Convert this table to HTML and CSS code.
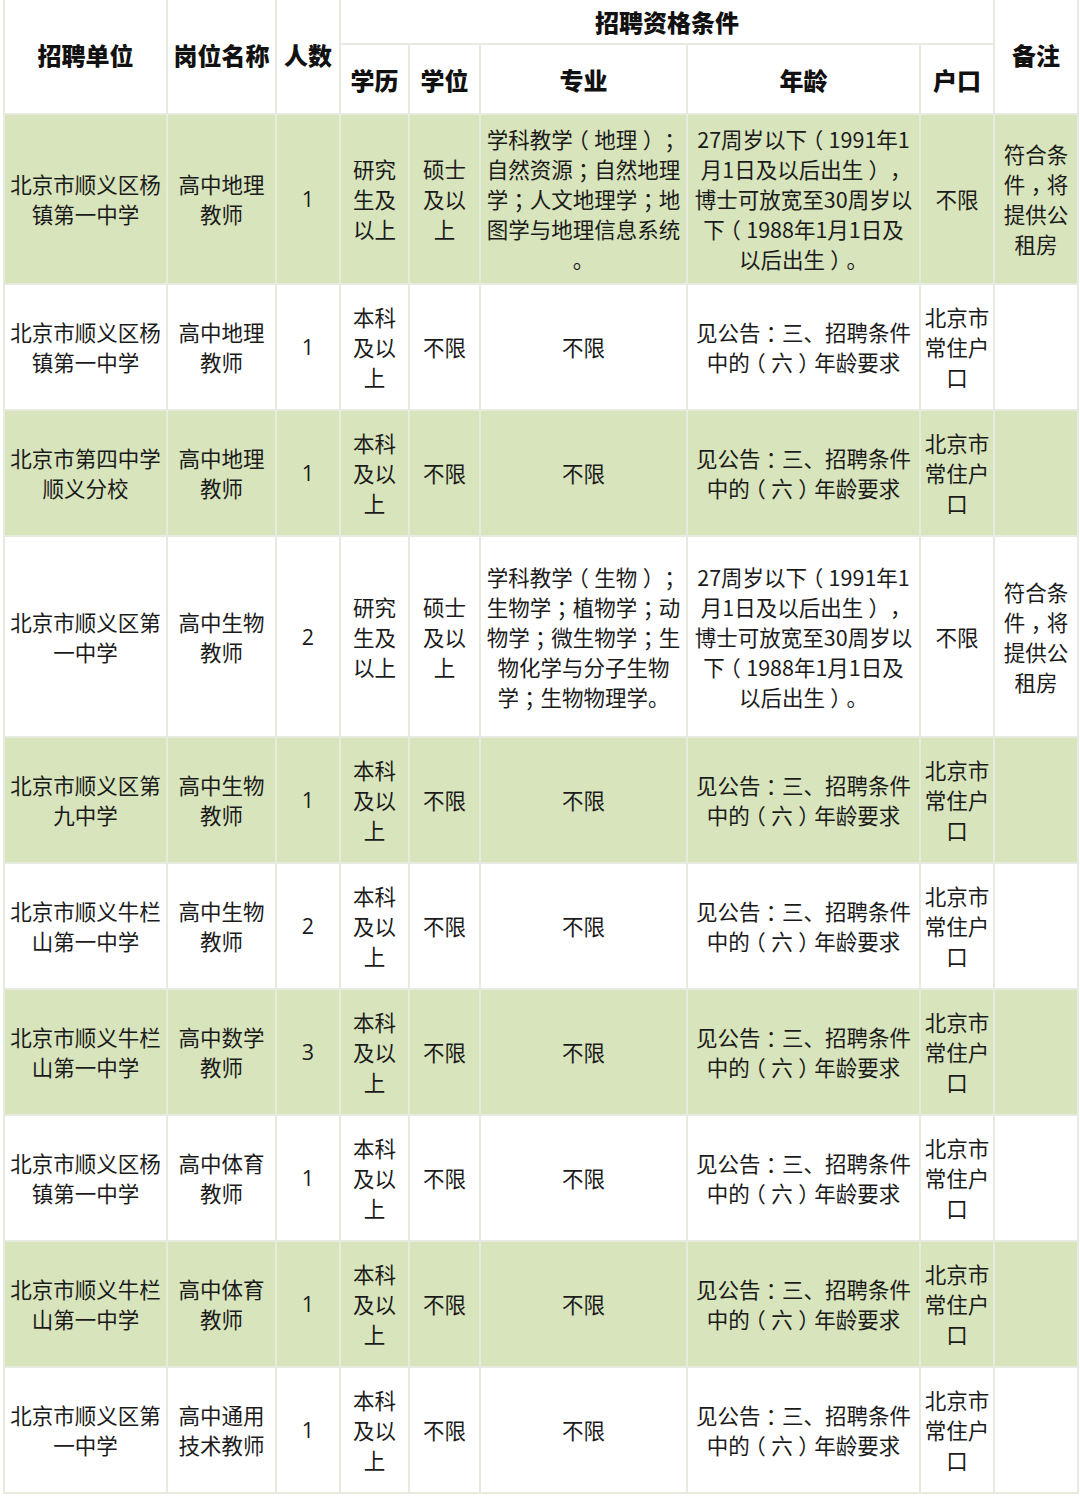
FILE: index.html
```html
<!DOCTYPE html>
<html lang="zh-CN">
<head>
<meta charset="utf-8">
<title>招聘岗位表</title>
<link rel="stylesheet" href="styles.css">
</head>
<body>
<table class="jobs">
  <colgroup>
    <col class="c-unit"><col class="c-post"><col class="c-num"><col class="c-edu"><col class="c-deg"><col class="c-major"><col class="c-age"><col class="c-hukou"><col class="c-note">
  </colgroup>
  <thead>
    <tr class="h1">
      <th rowspan="2">招聘单位</th>
      <th rowspan="2">岗位名称</th>
      <th rowspan="2">人数</th>
      <th colspan="5" class="group">招聘资格条件</th>
      <th rowspan="2">备注</th>
    </tr>
    <tr class="h2">
      <th class="sub">学历</th>
      <th class="sub">学位</th>
      <th class="sub">专业</th>
      <th class="sub">年龄</th>
      <th class="sub">户口</th>
    </tr>
  </thead>
  <tbody>
    <tr class="green tall1">
      <td>北京市顺义区杨<br>镇第一中学</td>
      <td>高中地理<br>教师</td>
      <td class="n">1</td>
      <td>研究<br>生及<br>以上</td>
      <td>硕士<br>及以<br>上</td>
      <td>学科教学<span class="p">（</span>地理<span class="p">）</span><span class="p">；</span><br>自然资源<span class="p">；</span>自然地理<br>学<span class="p">；</span>人文地理学<span class="p">；</span>地<br>图学与地理信息系统<br>。</td>
      <td>27周岁以下<span class="p">（</span>1991年1<br>月1日及以后出生<span class="p">）</span><span class="p">，</span><br>博士可放宽至30周岁以<br>下<span class="p">（</span>1988年1月1日及<br>以后出生<span class="p">）</span>。</td>
      <td>不限</td>
      <td>符合条<br>件<span class="p">，</span>将<br>提供公<br>租房</td>
    </tr>
    <tr>
      <td>北京市顺义区杨<br>镇第一中学</td>
      <td>高中地理<br>教师</td>
      <td class="n">1</td>
      <td>本科<br>及以<br>上</td>
      <td>不限</td>
      <td>不限</td>
      <td>见公告<span class="p">：</span>三、招聘条件<br>中的<span class="p">（</span>六<span class="p">）</span>年龄要求</td>
      <td>北京市<br>常住户<br>口</td>
      <td></td>
    </tr>
    <tr class="green">
      <td>北京市第四中学<br>顺义分校</td>
      <td>高中地理<br>教师</td>
      <td class="n">1</td>
      <td>本科<br>及以<br>上</td>
      <td>不限</td>
      <td>不限</td>
      <td>见公告<span class="p">：</span>三、招聘条件<br>中的<span class="p">（</span>六<span class="p">）</span>年龄要求</td>
      <td>北京市<br>常住户<br>口</td>
      <td></td>
    </tr>
    <tr class="tall2">
      <td>北京市顺义区第<br>一中学</td>
      <td>高中生物<br>教师</td>
      <td class="n">2</td>
      <td>研究<br>生及<br>以上</td>
      <td>硕士<br>及以<br>上</td>
      <td>学科教学<span class="p">（</span>生物<span class="p">）</span><span class="p">；</span><br>生物学<span class="p">；</span>植物学<span class="p">；</span>动<br>物学<span class="p">；</span>微生物学<span class="p">；</span>生<br>物化学与分子生物<br>学<span class="p">；</span>生物物理学。</td>
      <td>27周岁以下<span class="p">（</span>1991年1<br>月1日及以后出生<span class="p">）</span><span class="p">，</span><br>博士可放宽至30周岁以<br>下<span class="p">（</span>1988年1月1日及<br>以后出生<span class="p">）</span>。</td>
      <td>不限</td>
      <td>符合条<br>件<span class="p">，</span>将<br>提供公<br>租房</td>
    </tr>
    <tr class="green">
      <td>北京市顺义区第<br>九中学</td>
      <td>高中生物<br>教师</td>
      <td class="n">1</td>
      <td>本科<br>及以<br>上</td>
      <td>不限</td>
      <td>不限</td>
      <td>见公告<span class="p">：</span>三、招聘条件<br>中的<span class="p">（</span>六<span class="p">）</span>年龄要求</td>
      <td>北京市<br>常住户<br>口</td>
      <td></td>
    </tr>
    <tr>
      <td>北京市顺义牛栏<br>山第一中学</td>
      <td>高中生物<br>教师</td>
      <td class="n">2</td>
      <td>本科<br>及以<br>上</td>
      <td>不限</td>
      <td>不限</td>
      <td>见公告<span class="p">：</span>三、招聘条件<br>中的<span class="p">（</span>六<span class="p">）</span>年龄要求</td>
      <td>北京市<br>常住户<br>口</td>
      <td></td>
    </tr>
    <tr class="green">
      <td>北京市顺义牛栏<br>山第一中学</td>
      <td>高中数学<br>教师</td>
      <td class="n">3</td>
      <td>本科<br>及以<br>上</td>
      <td>不限</td>
      <td>不限</td>
      <td>见公告<span class="p">：</span>三、招聘条件<br>中的<span class="p">（</span>六<span class="p">）</span>年龄要求</td>
      <td>北京市<br>常住户<br>口</td>
      <td></td>
    </tr>
    <tr>
      <td>北京市顺义区杨<br>镇第一中学</td>
      <td>高中体育<br>教师</td>
      <td class="n">1</td>
      <td>本科<br>及以<br>上</td>
      <td>不限</td>
      <td>不限</td>
      <td>见公告<span class="p">：</span>三、招聘条件<br>中的<span class="p">（</span>六<span class="p">）</span>年龄要求</td>
      <td>北京市<br>常住户<br>口</td>
      <td></td>
    </tr>
    <tr class="green">
      <td>北京市顺义牛栏<br>山第一中学</td>
      <td>高中体育<br>教师</td>
      <td class="n">1</td>
      <td>本科<br>及以<br>上</td>
      <td>不限</td>
      <td>不限</td>
      <td>见公告<span class="p">：</span>三、招聘条件<br>中的<span class="p">（</span>六<span class="p">）</span>年龄要求</td>
      <td>北京市<br>常住户<br>口</td>
      <td></td>
    </tr>
    <tr>
      <td>北京市顺义区第<br>一中学</td>
      <td>高中通用<br>技术教师</td>
      <td class="n">1</td>
      <td>本科<br>及以<br>上</td>
      <td>不限</td>
      <td>不限</td>
      <td>见公告<span class="p">：</span>三、招聘条件<br>中的<span class="p">（</span>六<span class="p">）</span>年龄要求</td>
      <td>北京市<br>常住户<br>口</td>
      <td></td>
    </tr>
  </tbody>
</table>
</body>
</html>
```

FILE: styles.css
```css
html, body {
  margin: 0;
  padding: 0;
  background: #ffffff;
}

body {
  padding-left: 3px;
  font-family: "Noto Sans CJK SC", "Noto Sans", sans-serif;
  color: #1b1b1b;
}

.jobs {
  border-collapse: collapse;
  table-layout: fixed;
  width: 1074px;
  font-size: 21.5px;
  line-height: 30px;
}

.c-unit { width: 163px; }
.c-post { width: 109px; }
.c-num { width: 64px; }
.c-edu { width: 69px; }
.c-deg { width: 71px; }
.c-major { width: 207px; }
.c-age { width: 233px; }
.c-hukou { width: 74px; }
.c-note { width: 84px; }

.jobs th,
.jobs td {
  border: 2px solid #e7eadf;
  padding: 0;
  text-align: center;
  vertical-align: middle;
  white-space: nowrap;
  overflow: hidden;
}

.jobs thead tr:first-child th {
  border-top: none;
}

.jobs th {
  font-weight: 900;
  font-size: 24px;
  color: #111111;
}

.h1 th {
  height: 43px;
}

.h1 th[rowspan] {
  padding-bottom: 4px;
}

.h2 th {
  height: 66px;
  padding-top: 2px;
}

.jobs td {
  height: 124px;
}

.jobs tr.tall1 td {
  height: 168px;
}

.jobs tr.tall2 td {
  height: 199px;
}

.green td {
  background: #d8e4bc;
}

.n {
  font-family: "Open Sans", "Noto Sans", sans-serif;
  font-weight: 400;
}

/* full-width punctuation drawn centred in its em box, as in the source table */
.p {
  font-feature-settings: "halt" 1;
  padding: 0 0.25em;
}
```
